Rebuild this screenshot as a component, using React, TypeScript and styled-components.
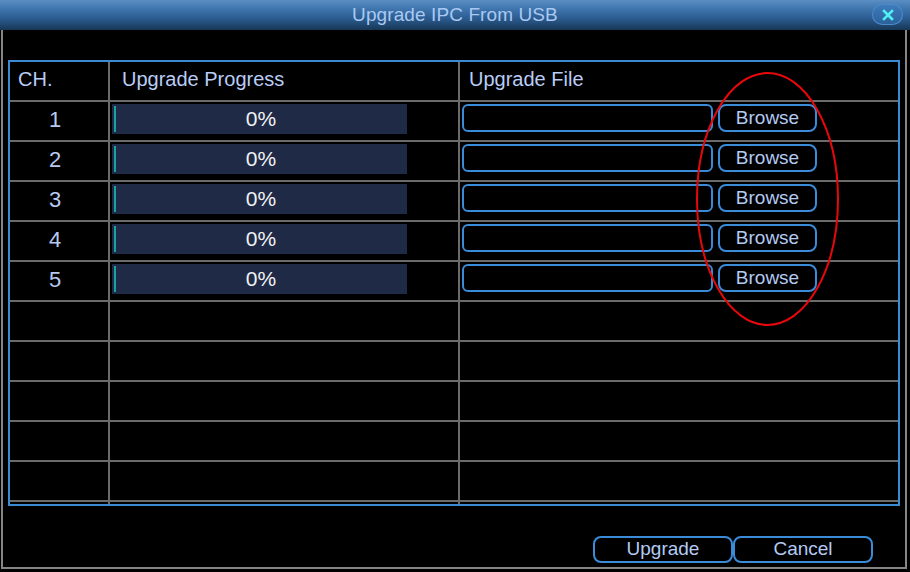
import React, { ReactElement } from 'react'
import styled, { createGlobalStyle } from 'styled-components'

const GlobalStyle = createGlobalStyle`
  html, body {
    margin: 0;
    padding: 0;
    background: #000;
  }
  body {
    font-family: "Liberation Sans", Arial, sans-serif;
  }
`

const Window = styled.div`
  position: relative;
  width: 910px;
  height: 572px;
  background: #000;
  display: flex;
  flex-direction: column;
  overflow: hidden;
`

const TitleBar = styled.div`
  height: 30px;
  flex: none;
  display: grid;
  grid-template-columns: 1fr auto 1fr;
  align-items: center;
  background: linear-gradient(#5a8ec4 0%, #3f75ad 30%, #2c5d92 60%, #173756 100%);
`

const Title = styled.div`
  grid-column: 2;
  color: #a9c9f2;
  font-size: 19px;
  line-height: 30px;
  padding-bottom: 2px;
  letter-spacing: 0.1px;
`

const CloseButton = styled.div`
  grid-column: 3;
  justify-self: end;
  margin-right: 7px;
  margin-bottom: 3px;
  width: 31px;
  height: 21px;
  border-radius: 11px;
  background: linear-gradient(#3f7dbd, #2a5f99);
  box-shadow: inset 0 0 0 1px #4c8bcb;
  display: flex;
  align-items: center;
  justify-content: center;
`

const Frame = styled.div`
  flex: 1;
  margin: 0 3px 3px 1px;
  border: 2px solid #858585;
  border-top: none;
  padding: 30px 5px 0 5px;
  display: flex;
  flex-direction: column;
`

const Table = styled.div`
  border: 2px solid #3c8ad4;
  display: grid;
  grid-template-columns: 98px 348px 438px;
  grid-template-rows: 38px repeat(10, 38px) 2px;
  gap: 2px;
  background: #6b6b6b;
`

const HeadCell = styled.div<{ $pad: number }>`
  background: #000;
  color: #b9cdf7;
  font-size: 20px;
  display: flex;
  align-items: center;
  padding: 0 0 4px ${(p) => p.$pad}px;
`

const Cell = styled.div`
  background: #000;
  display: flex;
  align-items: flex-start;
  padding-top: 2px;
  color: #b8c9f1;
`

const ChCell = styled(Cell)`
  justify-content: center;
  align-items: center;
  padding: 0 8px 2px 0;
  font-size: 22px;
`

const ProgressBar = styled.div`
  position: relative;
  margin-left: 2px;
  width: 295px;
  height: 30px;
  background: #1f2a47;
  color: #f2f2f2;
  font-size: 21px;
  display: flex;
  align-items: center;
  justify-content: center;
  padding-left: 1px;
  box-sizing: border-box;
  border-left: 2px solid #1f2a47;
`

const Fill = styled.div`
  position: absolute;
  left: 0;
  top: 2px;
  bottom: 2px;
  width: 2px;
  background: #17a3a3;
`

const FileCell = styled(Cell)`
  gap: 5px;
  padding-left: 2px;
`

const FileBox = styled.div`
  width: 251px;
  height: 28px;
  box-sizing: border-box;
  border: 2px solid #3a8bd8;
  border-radius: 6px;
`

const Button = styled.div<{ $w: number; $h: number }>`
  width: ${(p) => p.$w}px;
  height: ${(p) => p.$h}px;
  box-sizing: border-box;
  border: 2px solid #3a8bd8;
  border-radius: 8px;
  color: #b3cbf3;
  font-size: 19px;
  display: flex;
  align-items: center;
  justify-content: center;
  padding-bottom: 1px;
`

const Footer = styled.div`
  margin-top: 30px;
  display: flex;
  justify-content: flex-end;
  padding-right: 27px;
`

const Annotation = styled.svg`
  position: absolute;
  left: 0;
  top: 0;
  pointer-events: none;
`

const rows = [1, 2, 3, 4, 5, 0, 0, 0, 0, 0]

function App(): ReactElement {
  return (
    <Window>
      <GlobalStyle />
      <TitleBar>
        <Title>Upgrade IPC From USB</Title>
        <CloseButton>
          <svg width="12" height="12" viewBox="0 0 12 12">
            <path d="M2 2 L10 10 M10 2 L2 10" stroke="#4ef0f4" strokeWidth="2.6" strokeLinecap="square" />
          </svg>
        </CloseButton>
      </TitleBar>
      <Frame>
        <Table>
          <HeadCell $pad={8}>CH.</HeadCell>
          <HeadCell $pad={12}>Upgrade Progress</HeadCell>
          <HeadCell $pad={9}>Upgrade File</HeadCell>
          {rows.map((ch, i) =>
            ch ? (
              <React.Fragment key={i}>
                <ChCell>{ch}</ChCell>
                <Cell>
                  <ProgressBar>
                    <Fill />
                    0%
                  </ProgressBar>
                </Cell>
                <FileCell>
                  <FileBox />
                  <Button $w={99} $h={28}>Browse</Button>
                </FileCell>
              </React.Fragment>
            ) : (
              <React.Fragment key={i}>
                <Cell />
                <Cell />
                <Cell />
              </React.Fragment>
            )
          )}
          <Cell />
          <Cell />
          <Cell />
        </Table>
        <Footer>
          <Button $w={140} $h={27}>Upgrade</Button>
          <Button $w={140} $h={27}>Cancel</Button>
        </Footer>
      </Frame>
      <Annotation width="910" height="572">
        <ellipse cx="767.5" cy="199" rx="70.5" ry="126" fill="none" stroke="#e8080c" strokeWidth="2" />
      </Annotation>
    </Window>
  )
}

export default App
